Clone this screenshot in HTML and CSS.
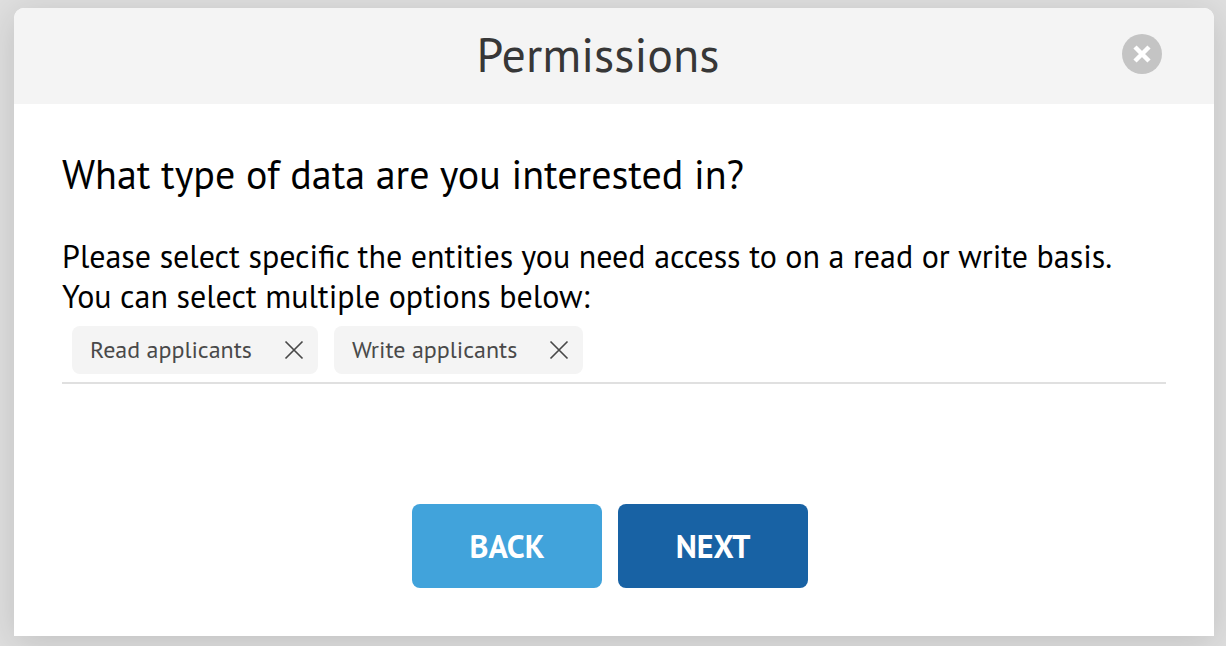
FILE: index.html
```html
<!DOCTYPE html>
<html lang="en">
<head>
<meta charset="utf-8">
<meta name="viewport" content="width=device-width, initial-scale=1">
<title>Permissions</title>
<link rel="stylesheet" href="styles.css">
</head>
<body>
<main class="dialog" role="dialog" aria-labelledby="dialog-title">
  <header class="dialog-header">
    <h1 class="dialog-title" id="dialog-title">Permissions</h1>
    <button class="close" type="button" aria-label="Close">
      <svg viewBox="0 0 40 40" aria-hidden="true"><path d="M13 13L27 27M27 13L13 27"/></svg>
    </button>
  </header>
  <section class="dialog-body">
    <h2 class="question">What type of data are you interested in?</h2>
    <p class="hint">Please select specific the entities you need access to on a read or write basis. You can select multiple options below:</p>
    <ul class="chips">
      <li class="chip">Read applicants
        <button class="chip-remove" type="button" aria-label="Remove Read applicants">
          <svg viewBox="0 0 20 20" aria-hidden="true"><path d="M1.500 1.500L18.500 18.500M18.500 1.500L1.500 18.500"/></svg>
        </button>
      </li>
      <li class="chip">Write applicants
        <button class="chip-remove" type="button" aria-label="Remove Write applicants">
          <svg viewBox="0 0 20 20" aria-hidden="true"><path d="M1.500 1.500L18.500 18.500M18.500 1.500L1.500 18.500"/></svg>
        </button>
      </li>
    </ul>
    <div class="actions">
      <button class="btn btn-back" type="button">BACK</button>
      <button class="btn btn-next" type="button">NEXT</button>
    </div>
  </section>
</main>
</body>
</html>
```
FILE: styles.css
```css
* {
  box-sizing: border-box;
}

body {
  margin: 0;
  padding: 8px 12px 10px 14px;
  background: #dfdfdf;
  color: #000;
  font-family: "PT Sans", "Noto Sans", sans-serif;
}

button {
  border: 0;
  padding: 0;
  font-family: inherit;
  cursor: pointer;
}

svg {
  display: block;
  width: 100%;
  height: 100%;
  fill: none;
}

.dialog {
  background: #fff;
  border-radius: 10px 10px 0 0;
  box-shadow: 0 6px 36px rgba(0, 0, 0, 0.14);
}

.dialog-header {
  display: flex;
  align-items: center;
  padding: 16px 52px 20px 60px;
  background: #f4f4f4;
  border-radius: 10px 10px 0 0;
}

.dialog-title {
  flex: 1;
  margin: 0;
  color: #373737;
  font-size: 48px;
  font-weight: 400;
  line-height: 60px;
  text-align: center;
}

.close {
  width: 40px;
  height: 40px;
  border-radius: 50%;
  background: #c4c4c4;
}

.close path {
  stroke: #fff;
  stroke-width: 4.500;
}

.dialog-body {
  padding: 44px 48px 48px;
}

.question {
  margin: 0 0 36px;
  font-size: 40px;
  font-weight: 400;
  line-height: 52px;
}

.hint {
  margin: 0 0 2px;
  font-size: 32px;
  line-height: 40px;
}

.chips {
  display: flex;
  flex-wrap: wrap;
  gap: 16px;
  margin: 0 0 120px;
  padding: 8px 10px;
  border-bottom: 2px solid #e0e0e0;
  list-style: none;
}

.chip {
  display: flex;
  align-items: center;
  justify-content: space-between;
  gap: 32px;
  padding: 0 14px 0 18px;
  border-radius: 8px;
  background: #f4f4f4;
  color: #494949;
  font-size: 24px;
  line-height: 48px;
}

.chip-remove {
  width: 20px;
  height: 20px;
  background: none;
}

.chip-remove path {
  stroke: #484848;
  stroke-width: 1.700;
}

.actions {
  display: flex;
  justify-content: center;
  gap: 16px;
  padding-right: 8px;
}

.btn {
  width: 190px;
  border-radius: 8px;
  color: #fff;
  font-size: 32px;
  font-weight: 700;
  line-height: 84px;
}

.btn-back {
  background: #41a3db;
}

.btn-next {
  background: #1862a4;
}
```
